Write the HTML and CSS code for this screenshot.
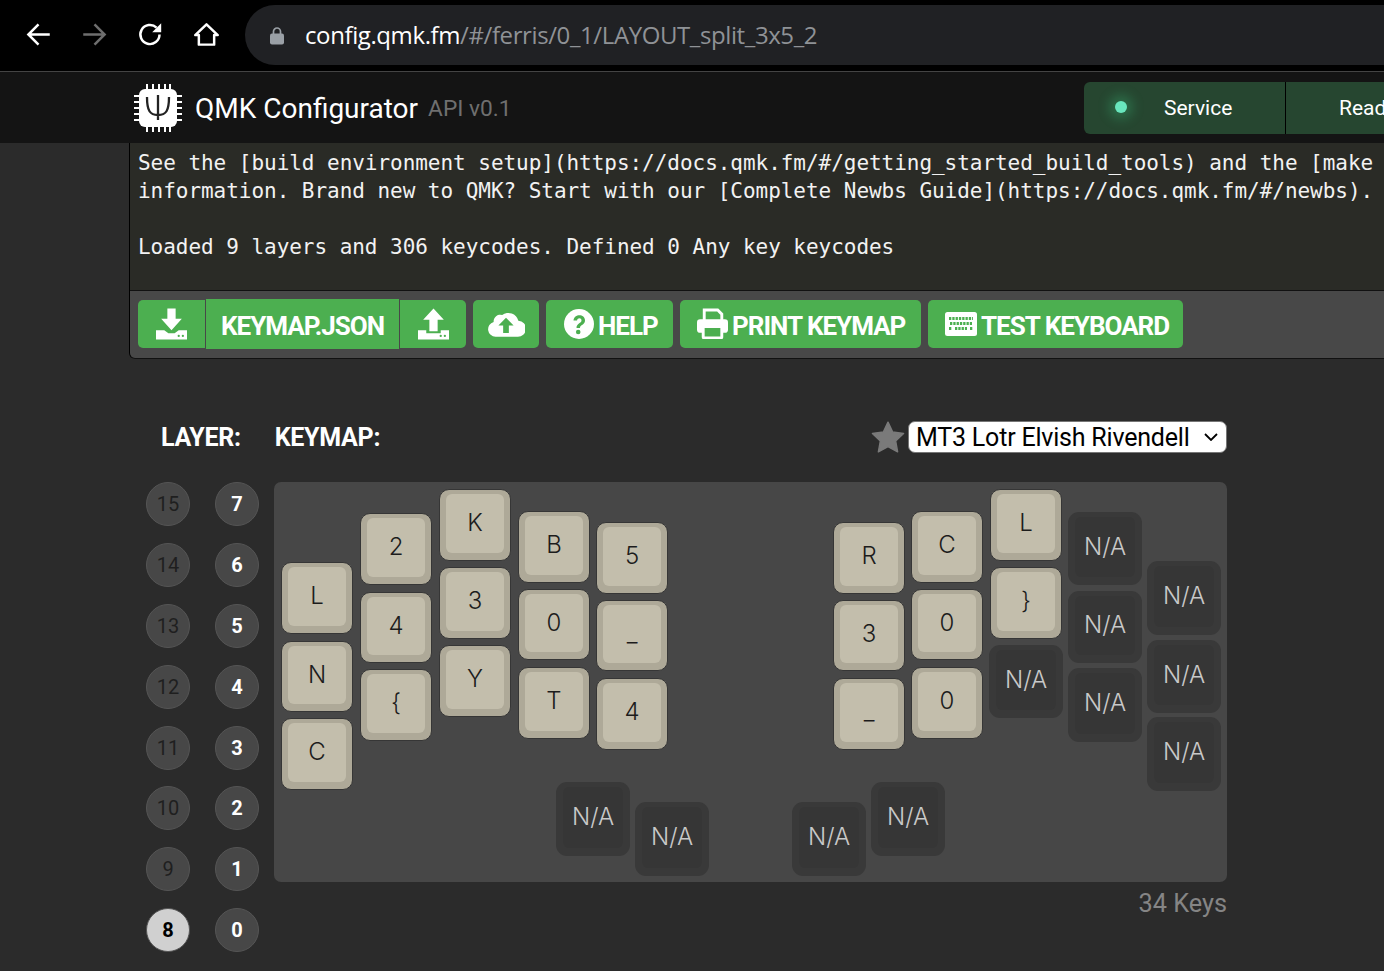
FILE: index.html
```html
<!DOCTYPE html>
<html lang="en">
<head>
    <meta charset="UTF-8">
    <title>QMK Configurator</title>
    <link rel="stylesheet" href="styles.css">
</head>
<body>

<div class="browser-bar">
    <svg class="nav-icon" viewBox="0 0 24 24"><path d="M22 12H4M12 3l-9 9 9 9" fill="none" stroke="#fff" stroke-width="2.2"/></svg>
    <svg class="nav-icon" viewBox="0 0 24 24"><path d="M2 12h18M12 3l9 9-9 9" fill="none" stroke="#6e6e6e" stroke-width="2.2"/></svg>
    <svg class="nav-icon" viewBox="0 0 24 24"><path d="M20 12a8.5 8.5 0 1 1-2.6-6.1" fill="none" stroke="#fff" stroke-width="2.2"/><path d="M21.5 2v8h-8z" fill="#fff"/></svg>
    <svg class="nav-icon" viewBox="0 0 24 24"><path d="M12 3L2 12.5h3.2V21h13.6v-8.500H22z" fill="none" stroke="#fff" stroke-width="2.2" stroke-linejoin="round"/></svg>
    <div class="omnibox">
        <svg class="lock" viewBox="0 0 14 18"><path d="M3.500 8V5a3.500 3.500 0 0 1 7 0v3" fill="none" stroke="#9aa0a6" stroke-width="1.7"/><rect x="0" y="7" width="14" height="11" rx="2" fill="#9aa0a6"/></svg>
        <span class="url">config.qmk.fm<span class="url-path">/#/ferris/0_1/LAYOUT_split_3x5_2</span></span>
    </div>
</div>

<header class="app-header">
    <svg class="logo" viewBox="0 0 50 50">
        <path d="M14 1v48M20 1v48M26 1v48M32 1v48M37 1v48M1 13h48M1 19h48M1 25h48M1 31h48M1 37h48" stroke="#fff" stroke-width="2"/>
        <rect x="6" y="6" width="38" height="38" rx="6" fill="#fff"/>
        <path d="M14 14c0 14 3 18 11 18s11-4 11-18M25 12v25" fill="none" stroke="#222" stroke-width="2.300"/>
    </svg>
    <h1 class="title">QMK Configurator</h1>
    <span class="api-version">API v0.1</span>
    <div class="status">
        <div class="status-service"><span class="status-dot"></span><span>Service</span></div>
        <div class="status-read">Read</div>
    </div>
</header>

<main class="content">
    <section class="console-panel">
        <pre class="console">See the [build environment setup](https://docs.qmk.fm/#/getting_started_build_tools) and the [make
information. Brand new to QMK? Start with our [Complete Newbs Guide](https://docs.qmk.fm/#/newbs).

Loaded 9 layers and 306 keycodes. Defined 0 Any key keycodes</pre>
        <div class="toolbar">
            <div class="btn-group">
                <button class="btn btn-icon-left"><svg class="ico" viewBox="0 0 30 30"><path d="M11 0h8v10h6L15 21 5 10h6z" fill="#fff"/><path d="M0 21h8l4 3h6l4-3h8v9H0z" fill="#fff"/><circle cx="22" cy="26.500" r="1.100" fill="#4caf50"/><circle cx="26" cy="26.500" r="1.100" fill="#4caf50"/></svg></button>
                <button class="btn btn-name"><span class="btn-label">KEYMAP.JSON</span></button>
                <button class="btn btn-icon-right"><svg class="ico" viewBox="0 0 30 30"><path d="M15 0l10 11h-6v11h-8V11H5z" fill="#fff"/><path d="M0 21h8v3h14v-3h8v9H0z" fill="#fff"/><circle cx="22" cy="26.500" r="1.100" fill="#4caf50"/><circle cx="26" cy="26.500" r="1.100" fill="#4caf50"/></svg></button>
            </div>
            <button class="btn btn-cloud"><svg class="ico-cloud" viewBox="0 0 40 30"><path d="M9 29a8 8 0 0 1-2-15.700A7 7 0 0 1 16 6a11 11 0 0 1 17 6 8.500 8.500 0 0 1-1 17z" fill="#fff"/><path d="M20 9l8 8h-5v8h-6v-8h-5z" fill="#4caf50"/></svg></button>
            <button class="btn btn-help"><svg class="ico-help" viewBox="0 0 30 30"><circle cx="15" cy="15" r="15" fill="#fff"/><path d="M9.500 11.500c.5-7 11.500-7 11.500 0 0 4.500-5 4-5 7.500h-3.500c0-5 5-4.500 5-7.500 0-3-4-3-4.500 0z" fill="#4caf50"/><circle cx="14.200" cy="23" r="2.300" fill="#4caf50"/></svg><span class="btn-label">HELP</span></button>
            <button class="btn btn-print"><svg class="ico-print" viewBox="0 0 30 30"><path d="M7 12V2h13l4 4v6" fill="none" stroke="#fff" stroke-width="2.800"/><rect x="0" y="11" width="30" height="13" rx="3" fill="#fff"/><rect x="6" y="18" width="18" height="11" rx="1" fill="#4caf50" stroke="#fff" stroke-width="2.800"/></svg><span class="btn-label">PRINT KEYMAP</span></button>
            <button class="btn btn-test"><svg class="ico-kbd" viewBox="0 0 32 24"><rect width="32" height="24" rx="2.500" fill="#fff"/><path d="M4 6.500h24M5 11.500h22M4 16.500h3M10 16.500h12M25 16.500h3" stroke="#4caf50" stroke-width="3" stroke-dasharray="2.300 1"/></svg><span class="btn-label">TEST KEYBOARD</span></button>
        </div>
    </section>

    <div class="layout-row">
        <div class="labels">
            <span class="label-layer">LAYER:</span>
            <span class="label-keymap">KEYMAP:</span>
            <div class="theme-picker">
                <svg class="star" viewBox="0 0 24 24"><path d="M12 1.500l3.300 7 7.700 1-5.600 5.300 1.400 7.700-6.800-3.700-6.800 3.700 1.400-7.700L1 9.500l7.700-1z" fill="#7a7a7a" stroke="#7a7a7a" stroke-linejoin="round"/></svg>
                <div class="select-box">MT3 Lotr Elvish Rivendell<svg class="chevron" viewBox="0 0 14 8"><path d="M1 1l6 6 6-6" fill="none" stroke="#000" stroke-width="1.800"/></svg></div>
            </div>
        </div>

        <div class="board-row">
            <div class="layers">
                <div class="layer dim">15</div><div class="layer">7</div>
                <div class="layer dim">14</div><div class="layer">6</div>
                <div class="layer dim">13</div><div class="layer">5</div>
                <div class="layer dim">12</div><div class="layer">4</div>
                <div class="layer dim">11</div><div class="layer">3</div>
                <div class="layer dim">10</div><div class="layer">2</div>
                <div class="layer dim">9</div><div class="layer">1</div>
                <div class="layer active">8</div><div class="layer">0</div>
            </div>
            <div class="board-col">
                <div class="board" id="board"></div>
                <div class="key-count">34 Keys</div>
            </div>
        </div>
    </div>
</main>

<script>
// [legend, x, y, h] relative to the board, light keys are 72 wide
var lightKeys = [
    ['L', 7, 80, 72], ['N', 7, 159, 71], ['C', 7, 236, 72],
    ['2', 86, 31, 72], ['4', 86, 110, 71], ['{', 86, 187, 72],
    ['K', 165, 7, 72], ['3', 165, 85, 72], ['Y', 165, 163, 72],
    ['B', 244, 29, 72], ['0', 244, 107, 71], ['T', 244, 185, 72],
    ['5', 322, 40, 72], ['_', 322, 118, 71], ['4', 322, 196, 72],
    ['R', 559, 40, 72], ['3', 559, 118, 71], ['_', 559, 196, 72],
    ['C', 637, 29, 72], ['0', 637, 107, 71], ['0', 637, 185, 72],
    ['L', 716, 7, 72], ['}', 716, 85, 72]
];
// [x, y, h] for the unassigned keys, 74 wide
var emptyKeys = [
    [715, 163, 73],
    [794, 30, 73], [794, 109, 72], [794, 186, 74],
    [873, 79, 74], [873, 158, 73], [873, 235, 74],
    [282, 300, 74], [361, 320, 74], [518, 320, 74], [597, 300, 74]
];

var board = document.getElementById('board');

function addKey(cls, text, x, y, h) {
    var key = document.createElement('div');
    key.className = 'key ' + cls;
    key.style.left = x + 'px';
    key.style.top = y + 'px';
    key.style.height = h + 'px';
    var cap = document.createElement('div');
    cap.className = 'cap';
    cap.textContent = text;
    key.appendChild(cap);
    board.appendChild(key);
}

lightKeys.forEach(function (k) { addKey('light', k[0], k[1], k[2], k[3]); });
emptyKeys.forEach(function (k) { addKey('empty', 'N/A', k[0], k[1], k[2]); });
</script>

</body>
</html>
```
FILE: styles.css
```css
html, body {
    margin: 0;
    padding: 0;
    height: 971px;
    overflow: hidden;
}

body {
    background-color: #2b2b2b;
    font-family: Roboto, sans-serif;
    color: #fff;
}

.browser-bar {
    height: 71px;
    box-sizing: border-box;
    background-color: #000;
    display: flex;
    align-items: center;
    padding: 0 0 1px 25px;
}

.nav-icon {
    width: 27px;
    height: 27px;
    margin: 0 29px 2px 0;
    flex: none;
}

.omnibox {
    margin-left: -4px;
    flex: 1;
    height: 60px;
    background-color: #202124;
    border-radius: 30px 0 0 30px;
    display: flex;
    align-items: center;
    padding-left: 25px;
}

.lock {
    width: 14px;
    height: 19px;
    margin-right: 21px;
}

.url {
    font-family: "Open Sans", sans-serif;
    font-size: 24px;
    letter-spacing: -0.4px;
    color: #fff;
    white-space: nowrap;
    margin-bottom: 2px;
}

.url-path {
    color: #8f9296;
}

.app-header {
    height: 72px;
    box-sizing: border-box;
    border-top: 1px solid #444;
    background-color: #141414;
    display: flex;
    align-items: center;
    padding-left: 133px;
}

.logo {
    width: 50px;
    height: 50px;
    margin-right: 12px;
}

.title {
    margin: 2px 0 0 0;
    font-size: 28px;
    font-weight: 400;
}

.api-version {
    margin: 2px 0 0 10px;
    font-size: 22.700px;
    color: #6f6f6f;
}

.status {
    margin-left: auto;
    height: 52px;
    display: flex;
    width: 300px;
    background-color: #264630;
    border-radius: 6px 0 0 6px;
    font-size: 21px;
}

.status-service {
    flex: none;
    width: 202px;
    border-right: 1px solid #000;
    display: flex;
    align-items: center;
    padding-left: 31px;
    box-sizing: border-box;
}

.status-dot {
    width: 12px;
    height: 12px;
    border-radius: 50%;
    background-color: #69e6bd;
    box-shadow: 0 0 12px 6px rgba(60, 200, 130, 0.3);
    margin: 0 37px 2px 0;
}

.status-read {
    padding-left: 53px;
    line-height: 52px;
    white-space: nowrap;
}

.content {
    padding-left: 129px;
}

.console-panel {
    width: 1255px;
    box-sizing: border-box;
    border-left: 1px solid #000;
    border-bottom: 1px solid #111;
    border-radius: 0 0 0 6px;
    background-color: #484848;
}

.console {
    margin: 0;
    height: 148px;
    box-sizing: border-box;
    background-color: #2a2b26;
    border-bottom: 1px solid #111;
    padding: 6px 0 0 8px;
    font-family: "DejaVu Sans Mono", monospace;
    font-size: 21px;
    letter-spacing: -0.04px;
    line-height: 28px;
    color: #f2f2f2;
    overflow: hidden;
    white-space: pre;
}

.toolbar {
    height: 67px;
    box-sizing: border-box;
    display: flex;
    align-items: center;
    padding: 0 0 2px 8px;
    gap: 7px;
}

.btn-group {
    display: flex;
    align-items: center;
}

.btn {
    height: 48px;
    box-sizing: border-box;
    border: 0;
    padding: 0;
    background-color: #4caf50;
    color: #fff;
    font-family: Roboto, sans-serif;
    font-size: 26px;
    font-weight: 700;
    letter-spacing: -1px;
    border-radius: 5px;
    display: flex;
    align-items: center;
    white-space: nowrap;
}

.btn-label {
    margin-top: 4px;
}

.btn-icon-left {
    width: 67px;
    justify-content: center;
    border-radius: 5px 0 0 5px;
}

.btn-name {
    width: 193px;
    height: 50px;
    margin-left: 1px;
    justify-content: center;
    border-radius: 0;
}

.btn-icon-right {
    width: 66px;
    margin-left: 1px;
    justify-content: center;
    border-radius: 0 5px 5px 0;
}

.btn-cloud {
    width: 66px;
    justify-content: center;
}

.btn-help {
    width: 127px;
    padding-left: 18px;
}

.btn-print {
    width: 241px;
    padding-left: 17px;
}

.btn-test {
    width: 255px;
    padding-left: 16px;
}

.ico {
    width: 31px;
    height: 32px;
}

.ico-cloud {
    width: 38px;
    height: 29px;
}

.ico-help {
    width: 30px;
    height: 30px;
    margin-right: 4px;
}

.ico-print {
    width: 31px;
    height: 31px;
    margin-right: 4px;
}

.ico-kbd {
    width: 34px;
    height: 24px;
    margin-right: 3px;
}

.layout-row {
    width: 1098px;
    padding-top: 61px;
}

.labels {
    display: flex;
    align-items: center;
    height: 34px;
    font-size: 25px;
    font-weight: 700;
    letter-spacing: -0.3px;
    padding-left: 32px;
}

.label-keymap {
    margin-left: 34px;
}

.theme-picker {
    margin-left: auto;
    display: flex;
    align-items: center;
}

.star {
    width: 34px;
    height: 34px;
    margin-right: 3px;
}

.select-box {
    width: 319px;
    height: 32px;
    box-sizing: border-box;
    background-color: #fff;
    border: 1px solid #767676;
    border-radius: 7px;
    color: #000;
    font-size: 25px;
    font-weight: 400;
    letter-spacing: -0.2px;
    display: flex;
    align-items: center;
    justify-content: space-between;
    padding: 0 8px 0 7px;
}

.chevron {
    width: 14px;
    height: 8px;
}

.board-row {
    display: flex;
    margin-top: 28px;
}

.layers {
    width: 145px;
    padding-left: 17px;
    box-sizing: border-box;
    display: grid;
    grid-template-columns: 44px 44px;
    column-gap: 25px;
    row-gap: 16.900px;
    grid-auto-rows: 44px;
}

.layer {
    width: 44px;
    height: 44px;
    box-sizing: border-box;
    border-radius: 50%;
    background-color: #474747;
    border: 1px solid #555;
    display: flex;
    align-items: center;
    justify-content: center;
    font-size: 20px;
    font-weight: 700;
    color: #fff;
}

.layer.dim {
    font-weight: 400;
    color: #1f1f1f;
}

.layer.active {
    background-color: #d0d0d0;
    color: #000;
}

.board-col {
    width: 953px;
}

.board {
    position: relative;
    height: 400px;
    background-color: #474747;
    border-radius: 7px;
}

.key-count {
    margin-top: 7px;
    text-align: right;
    font-size: 25.300px;
    color: #858585;
    line-height: 30px;
}

.key {
    position: absolute;
    box-sizing: border-box;
    display: flex;
}

.key.light {
    width: 72px;
    background-color: #aea998;
    border: 1px solid #363636;
    border-radius: 10px;
    padding: 4px 6px 7px 6px;
}

.key.empty {
    width: 74px;
    background-color: #393939;
    border-radius: 11px;
    padding: 5px 7px 8px 7px;
}

.cap {
    flex: 1;
    display: flex;
    align-items: center;
    justify-content: center;
    border-radius: 6px;
    font-family: Inter, sans-serif;
    font-size: 24px;
    font-weight: 300;
    padding-bottom: 2px;
}

.key.light .cap {
    background-color: #c3beac;
    color: #1c1c1c;
}

.key.empty .cap {
    background-color: #363636;
    color: #c9c9c9;
}
```
